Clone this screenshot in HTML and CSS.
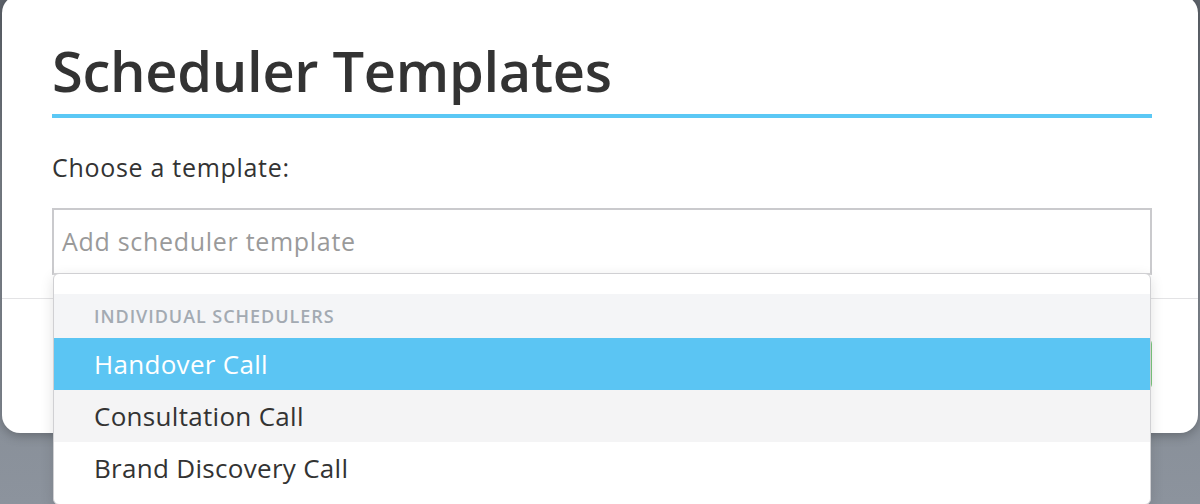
FILE: index.html
```html
<!DOCTYPE html>
<html>
<head>
<meta charset="utf-8">
<link rel="stylesheet" href="styles.css">
</head>
<body>
<div class="modal">
  <div class="modal-body">
    <h1 class="title">Scheduler Templates</h1>
    <div class="label">Choose a template:</div>
    <div class="select">
      <div class="select-input">Add scheduler template</div>
      <div class="menu">
        <div class="menu-group">Individual Schedulers</div>
        <div class="menu-item active">Handover Call</div>
        <div class="menu-item alt">Consultation Call</div>
        <div class="menu-item">Brand Discovery Call</div>
      </div>
    </div>
  </div>
  <div class="modal-footer">
    <button class="btn-save">Save</button>
  </div>
</div>
</body>
</html>
```

FILE: styles.css
```css
html, body {
  margin: 0;
  padding: 0;
}
body {
  width: 1200px;
  height: 504px;
  overflow: hidden;
  background: linear-gradient(180deg, #5f656d 0%, #80878f 35%, #8c939d 100%);
  font-family: "Open Sans", "Liberation Sans", sans-serif;
}
.modal {
  margin: -5px 0 0 2px;
  width: 1196px;
  height: 438px;
  background: #fff;
  border-radius: 18px;
  box-shadow: 0 2px 12px rgba(0,0,0,0.3);
  display: flex;
  flex-direction: column;
}
.modal-body {
  padding: 5px 46px 23px 50px;
}
.title {
  margin: 0;
  padding-top: 38px;
  height: 76px;
  font-size: 56px;
  font-weight: 600;
  color: #333;
  line-height: 64px;
  letter-spacing: -0.3px;
  border-bottom: 4px solid #5bc8f5;
}
.label {
  margin-top: 34px;
  font-size: 25px;
  line-height: 30px;
  color: #333;
  letter-spacing: 0.7px;
}
.select {
  position: relative;
  margin-top: 26px;
}
.select-input {
  height: 63px;
  border: 2px solid #cacacd;
  border-bottom-color: #d6d6d8;
  padding-left: 8px;
  font-size: 25px;
  line-height: 63px;
  color: #9a9a9a;
  letter-spacing: 0.7px;
}
.menu {
  position: absolute;
  left: 1px;
  right: 1px;
  top: 65px;
  background: #fff;
  border: 1px solid #d0d0d3;
  border-radius: 6px;
  padding-top: 20px;
  padding-bottom: 10px;
  box-shadow: 0 4px 14px rgba(0,0,0,0.12);
  z-index: 5;
}
.menu-group {
  height: 44px;
  line-height: 44px;
  padding-left: 40px;
  background: #f4f5f7;
  color: #a3aab2;
  font-size: 18px;
  font-weight: 600;
  text-transform: uppercase;
  letter-spacing: 0.95px;
}
.menu-item {
  height: 52px;
  line-height: 52px;
  padding-left: 40px;
  font-size: 26px;
  color: #333;
  letter-spacing: 0.3px;
}
.menu-item.active {
  background: #5bc5f3;
  color: #fff;
}
.menu-item.alt {
  background: #f4f4f5;
}
.modal-footer {
  border-top: 1px solid #e3e3e5;
  padding: 39px 46px 0 50px;
  display: flex;
  justify-content: flex-end;
}
.btn-save {
  height: 52px;
  width: 140px;
  border: none;
  border-radius: 6px;
  background: #7cc87e;
  color: #fff;
  font-size: 20px;
  font-family: inherit;
}
```
